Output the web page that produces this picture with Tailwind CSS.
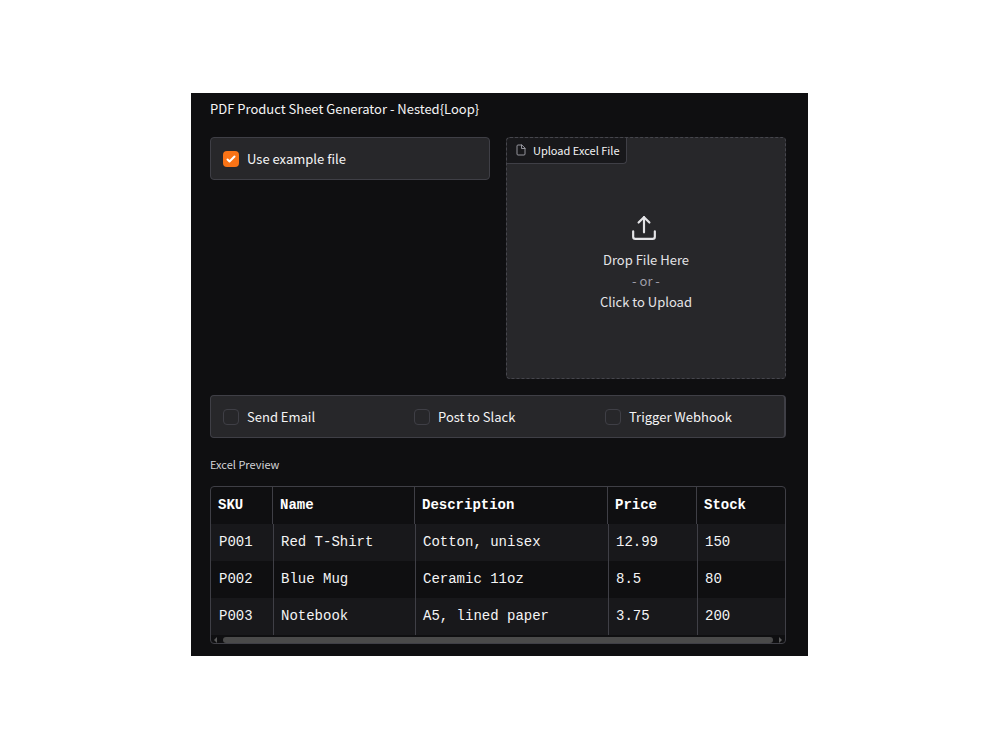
<!DOCTYPE html>
<html lang="en">
<head>
  <meta charset="UTF-8">
  <meta name="viewport" content="width=device-width, initial-scale=1.0">
  <title>PDF Product Sheet Generator</title>
  <script src="https://cdn.jsdelivr.net/npm/@tailwindcss/browser@4"></script>
</head>
<body class="bg-white min-h-screen flex justify-center items-start pt-[93px] pr-px font-['Noto_Sans_CJK_SC',sans-serif] text-[13px] leading-5 text-zinc-100">

  <main class="bg-[#0f0f11] w-full max-w-[617px] pl-[19px] pr-[22px] pt-1.5 pb-3">
    <h1>PDF Product Sheet Generator - Nested{Loop}</h1>

    <div class="grid grid-cols-2 gap-4 items-start mt-[18px]">
      <div class="bg-[#27272a] border border-[#3f3f46] rounded px-3 py-[11px]">
        <label class="flex items-center gap-2 leading-[19px]">
          <span class="grid">
            <input type="checkbox" checked class="appearance-none size-4 rounded bg-[#f97316] col-start-1 row-start-1">
            <svg class="size-4 col-start-1 row-start-1 pointer-events-none" viewBox="0 0 16 16" fill="white"><path d="M12.207 4.793a1 1 0 0 1 0 1.414l-5 5a1 1 0 0 1-1.414 0l-2-2a1 1 0 0 1 1.414-1.414L6.5 9.086l4.293-4.293a1 1 0 0 1 1.414 0z"/></svg>
          </span>
          Use example file
        </label>
      </div>

      <div class="relative bg-[#27272a] border border-dashed border-[#46464d] rounded h-[242px]">
        <div class="absolute top-0 left-0 flex items-center h-[26px] pl-2 pr-1.5 pb-0.5 gap-1.5 bg-[#18181b] border-r border-b border-[#3f3f46] rounded-tl rounded-br text-[11px] leading-4">
          <svg class="size-3 text-[#a1a1aa]" viewBox="0 0 24 24" fill="none" stroke="currentColor" stroke-width="1.8" stroke-linecap="round" stroke-linejoin="round"><path d="M13 2H6a2 2 0 0 0-2 2v16a2 2 0 0 0 2 2h12a2 2 0 0 0 2-2V9z"/><path d="M13 2v7h7"/></svg>
          Upload Excel File
        </div>
        <button type="button" class="w-full h-full pt-2.5 flex flex-col items-center justify-center leading-[21px] text-zinc-200">
          <svg class="w-[26px] h-[26px] mb-2 mr-1" viewBox="0 0 24 24" fill="none" stroke="currentColor" stroke-width="2" stroke-linecap="round" stroke-linejoin="round"><path d="M22 15v5a2 2 0 0 1-2 2H4a2 2 0 0 1-2-2v-5"/><path d="M17 7l-5-5-5 5"/><path d="M12 2v14"/></svg>
          <span>Drop File Here</span>
          <span class="text-zinc-400">- or -</span>
          <span>Click to Upload</span>
        </button>
      </div>
    </div>

    <div class="grid grid-cols-3 mt-4 bg-[#27272a] border border-r-2 border-[#3f3f46] rounded pl-3 py-[11px] leading-[19px]">
      <label class="flex items-center gap-2">
        <input type="checkbox" class="appearance-none size-4 rounded border border-[#3f3f46]">
        Send Email
      </label>
      <label class="flex items-center gap-2 pl-1">
        <input type="checkbox" class="appearance-none size-4 rounded border border-[#3f3f46]">
        Post to Slack
      </label>
      <label class="flex items-center gap-2 pl-2">
        <input type="checkbox" class="appearance-none size-4 rounded border border-[#3f3f46]">
        Trigger Webhook
      </label>
    </div>

    <h2 class="mt-[17px] mb-[13px] text-[11px] leading-[18px] text-zinc-300">Excel Preview</h2>

    <div class="border border-[#3f3f46] rounded overflow-hidden">
      <table class="w-full table-fixed border-separate border-spacing-0 text-left font-['Liberation_Mono',monospace] text-[14px] leading-[21px]">
        <colgroup>
          <col class="w-[62px]">
          <col class="w-[142px]">
          <col class="w-[193px]">
          <col class="w-[89px]">
          <col>
        </colgroup>
        <thead class="text-white">
          <tr>
            <th class="px-[7px] py-2 border-r border-[#3f3f46]">SKU</th>
            <th class="px-[7px] py-2 border-r border-[#3f3f46]">Name</th>
            <th class="px-[7px] py-2 border-r border-[#3f3f46]">Description</th>
            <th class="px-[7px] py-2 border-r border-[#3f3f46]">Price</th>
            <th class="px-[7px] py-2">Stock</th>
          </tr>
        </thead>
        <tbody>
          <tr class="bg-[#18181b]">
            <td class="px-[7px] py-2 border-l border-transparent">P001</td>
            <td class="px-[7px] py-2 border-l border-[#3f3f46]">Red T-Shirt</td>
            <td class="px-[7px] py-2 border-l border-[#3f3f46]">Cotton, unisex</td>
            <td class="px-[7px] py-2 border-l border-[#3f3f46]">12.99</td>
            <td class="px-[7px] py-2 border-l border-[#3f3f46]">150</td>
          </tr>
          <tr>
            <td class="px-[7px] py-2 border-l border-transparent">P002</td>
            <td class="px-[7px] py-2 border-l border-[#3f3f46]">Blue Mug</td>
            <td class="px-[7px] py-2 border-l border-[#3f3f46]">Ceramic 11oz</td>
            <td class="px-[7px] py-2 border-l border-[#3f3f46]">8.5</td>
            <td class="px-[7px] py-2 border-l border-[#3f3f46]">80</td>
          </tr>
          <tr class="bg-[#18181b]">
            <td class="px-[7px] py-2 border-l border-transparent">P003</td>
            <td class="px-[7px] py-2 border-l border-[#3f3f46]">Notebook</td>
            <td class="px-[7px] py-2 border-l border-[#3f3f46]">A5, lined paper</td>
            <td class="px-[7px] py-2 border-l border-[#3f3f46]">3.75</td>
            <td class="px-[7px] py-2 border-l border-[#3f3f46]">200</td>
          </tr>
        </tbody>
      </table>
      <!-- horizontal scrollbar -->
      <div class="flex items-center h-2 pt-0.5 px-[3px] gap-1.5 text-[#5a5a5a]">
        <svg class="w-[3px] h-1.5" viewBox="0 0 3 6" fill="currentColor"><path d="M3 0v6L0 3z"/></svg>
        <div class="flex-1 h-1.5 rounded-full bg-[#4a4a4a]"></div>
        <svg class="w-[3px] h-1.5" viewBox="0 0 3 6" fill="currentColor"><path d="M0 0v6l3-3z"/></svg>
      </div>
    </div>
  </main>

</body>
</html>
